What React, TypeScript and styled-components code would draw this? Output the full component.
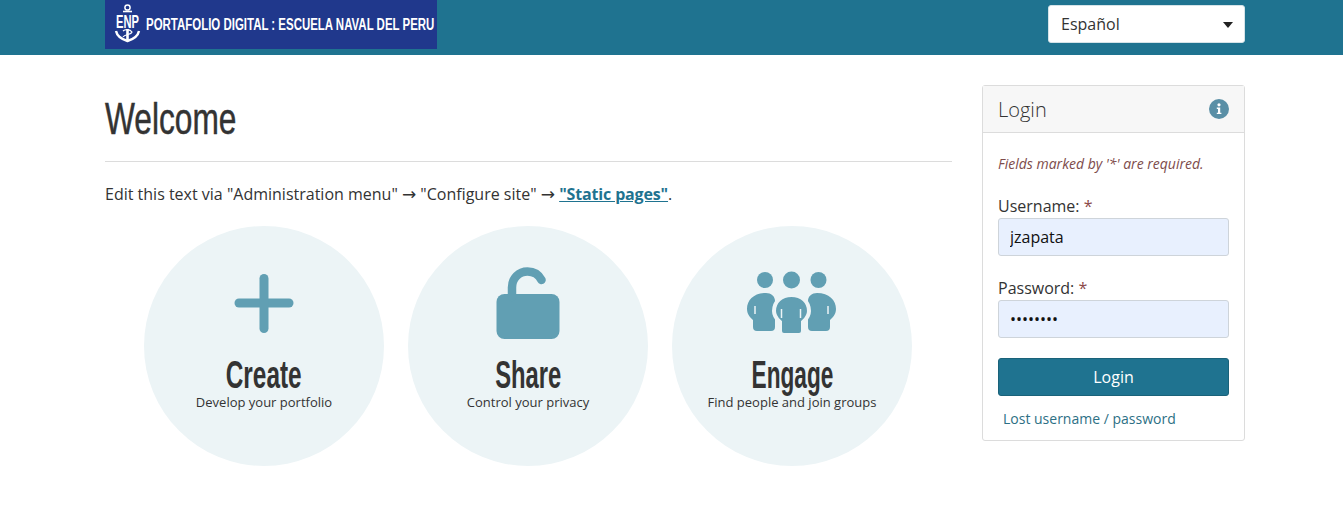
import type { ReactNode } from 'react';
import styled, { createGlobalStyle } from 'styled-components';

const GlobalStyle = createGlobalStyle`
  html, body {
    margin: 0;
    padding: 0;
    background: #fff;
    color: #333;
    font-family: "Open Sans", "Liberation Sans", sans-serif;
    font-size: 16px;
  }
  * { box-sizing: border-box; }
`;

const HEADING_FONT = `"Liberation Sans", Arial, sans-serif`;

const Header = styled.header`
  height: 55px;
  background: #1f7390;
  display: flex;
  justify-content: space-between;
  align-items: flex-start;
  padding: 0 98px 0 105px;
`;

const Logo = styled.div`
  width: 332px;
  height: 49px;
  background: #20388c;
  display: flex;
  align-items: center;
  padding-left: 9px;
  gap: 5px;
  color: #fff;
  svg { flex: none; }
`;

const LogoText = styled.span`
  flex: none;
  width: max-content;
  font-family: ${HEADING_FONT};
  font-weight: 700;
  font-size: 16px;
  white-space: nowrap;
  transform: scaleX(0.716);
  transform-origin: left center;
`;

const LangPicker = styled.div`
  position: relative;
  margin-top: 5px;
  width: 197px;
  height: 38px;
`;

const LangSelect = styled.select`
  width: 100%;
  height: 100%;
  appearance: none;
  border: 1px solid #d5e3e8;
  border-radius: 3px;
  background: #fff;
  color: #333;
  padding: 0 12px;
  font: 400 16px "Open Sans", sans-serif;
`;

const Caret = styled.span`
  position: absolute;
  right: 12px;
  top: 17px;
  border-left: 5.5px solid transparent;
  border-right: 5.5px solid transparent;
  border-top: 6px solid #222;
`;

const Page = styled.div`
  display: flex;
  gap: 30px;
  padding: 30px 98px 0 105px;
  align-items: flex-start;
`;

const Main = styled.main`
  width: 847px;
`;

const Title = styled.h1`
  margin: 0;
  padding-bottom: 13px;
  border-bottom: 1px solid #dcdcdc;
  font-family: ${HEADING_FONT};
  font-weight: 400;
  font-size: 44px;
  line-height: 63px;
  color: #333;
`;

const TitleText = styled.span`
  display: inline-block;
  transform: translateY(2px) scaleX(0.72);
  transform-origin: left center;
  -webkit-text-stroke: 0.5px #333;
`;

const Intro = styled.p`
  margin: 20px 0 0;
  line-height: 24px;
  color: #333;
`;

const Arrow = styled.span`
  font-family: "DejaVu Sans", sans-serif;
  font-size: 17px;
  line-height: 1;
`;

const IntroLink = styled.a`
  color: #1f7390;
  font-weight: 700;
  letter-spacing: -0.15px;
  text-decoration: underline;
`;

const Circles = styled.div`
  display: flex;
  justify-content: center;
  gap: 24px;
  margin-top: 20px;
  padding-right: 1px;
`;

const Circle = styled.div`
  width: 240px;
  height: 240px;
  border-radius: 50%;
  background: #ecf4f6;
  display: flex;
  flex-direction: column;
  align-items: center;
`;

const IconSlot = styled.div<{ $top: number }>`
  height: 130px;
  display: flex;
  justify-content: center;
  align-items: flex-start;
  padding-top: ${({ $top }) => $top}px;
  flex: none;
`;

const CircleTitle = styled.div<{ $stretch: number }>`
  font-family: ${HEADING_FONT};
  font-weight: 700;
  font-size: 39px;
  line-height: 37px;
  color: #333;
  transform: scaleX(${({ $stretch }) => $stretch});
`;

const CircleText = styled.div`
  font-size: 13px;
  line-height: 18px;
  color: #333;
`;

const Card = styled.aside`
  width: 263px;
  height: 356px;
  border: 1px solid #dcdcdc;
  border-radius: 3px;
`;

const CardHead = styled.div`
  height: 47px;
  background: #f7f7f7;
  border-bottom: 1px solid #dcdcdc;
  display: flex;
  align-items: center;
  justify-content: space-between;
  padding: 0 15px;
`;

const CardTitle = styled.h2`
  margin: 0;
  font-size: 20px;
  font-weight: 300;
  color: #333;
`;

const CardBody = styled.form`
  padding: 21px 15px 0;
`;

const Required = styled.p`
  margin: 0 0 21px;
  font-size: 14px;
  line-height: 19px;
  font-style: italic;
  color: #7d4b4b;
`;

const Field = styled.div`
  margin-bottom: 20px;
`;

const Label = styled.label`
  display: block;
  line-height: 24px;
  color: #333;
`;

const Star = styled.span`
  color: #8c4a4a;
`;

const Input = styled.input`
  display: block;
  width: 100%;
  height: 38px;
  border: 1px solid #ced4da;
  border-radius: 3px;
  background: #e8f0fe;
  color: #111;
  padding: 0 11px;
  font: 400 16px "Open Sans", sans-serif;
  outline: none;
`;

const Submit = styled.button`
  display: block;
  width: 100%;
  height: 38px;
  border: 1px solid #1a6279;
  border-radius: 3px;
  background: #1f7390;
  color: #fff;
  font: 400 16px "Open Sans", sans-serif;
`;

const Lost = styled.a`
  display: block;
  margin: 13px 0 0 5px;
  font-size: 14px;
  line-height: 20px;
  color: #2d7085;
  text-decoration: none;
`;

const AnchorLogo = () => (
  <svg width="27" height="42" viewBox="0 0 27 42" fill="none" stroke="#fff">
    <circle cx="13.500" cy="3.500" r="2.600" strokeWidth="1.500" />
    <path d="M9 7.500h9" strokeWidth="1.600" />
    <path d="M13.500 25v12" strokeWidth="2.600" />
    <path d="M2 27c1 5 5 8 11.500 10 6.500-2 10.500-5 11.500-10" strokeWidth="2.400" />
    <path d="M9 27c2-2 7-2 9 1-1 3-7 2-9 5" strokeWidth="1.200" />
    <text transform="translate(13.500 24) scale(0.62 1)" textAnchor="middle" fill="#fff" stroke="none" fontFamily="'Liberation Sans', sans-serif" fontWeight="700" fontSize="18">ENP</text>
  </svg>
);

const PlusIcon = () => (
  <svg width="60" height="60" viewBox="0 0 60 60" fill="#619fb3">
    <rect x="0.500" y="24.500" width="59" height="9" rx="4.500" />
    <rect x="25.500" y="0" width="9" height="59" rx="4.500" />
  </svg>
);

const LockIcon = () => (
  <svg width="64" height="72" viewBox="0 0 64 72">
    <rect x="0.500" y="27" width="63" height="45" rx="8" fill="#619fb3" />
    <path d="M16 30V20.500C16 11 23 4.500 31.500 4.500 38 4.500 43 8 45.500 13" fill="none" stroke="#619fb3" strokeWidth="8.500" strokeLinecap="round" />
  </svg>
);

const sideBody = 'M20 22C8 22 1 29 1 38c0 6 4 9 6 11v7a4 4 0 0 0 4 4h14a4 4 0 0 0 4-4V30c0-5-4-8-9-8Z';

const PeopleIcon = () => (
  <svg width="92" height="66" viewBox="0 0 92 66" fill="#619fb3">
    <circle cx="19" cy="9" r="8" />
    <circle cx="45.500" cy="9" r="8.500" />
    <circle cx="72.500" cy="9" r="8" />
    <path d={sideBody} />
    <path d={sideBody} transform="matrix(-1 0 0 1 91 0)" />
    <path
      d="M45.500 24C56 24 63 31 63 40c0 6-4 9-6 11v9a4 4 0 0 1-4 4H38a4 4 0 0 1-4-4v-9c-2-2-6-5-6-11 0-9 7-16 17.500-16Z"
      stroke="#ecf4f6"
      strokeWidth="4"
    />
    <path d="M9 35v8M82 35v8M35.500 38v9M54.500 38v9" stroke="#ecf4f6" strokeWidth="1.500" />
  </svg>
);

const InfoIcon = () => (
  <svg width="20" height="20" viewBox="0 0 20 20">
    <circle cx="10" cy="10" r="10" fill="#5a8fa6" />
    <circle cx="10" cy="5.800" r="1.600" fill="#fff" />
    <path d="M7.800 8.500h3.400v5.200h1.200v1.400H7.800v-1.400H9V9.900H7.800Z" fill="#fff" />
  </svg>
);

const features: { title: string; text: string; top: number; stretch: number; icon: ReactNode }[] = [
  { title: 'Create', text: 'Develop your portfolio', top: 48, stretch: 0.625, icon: <PlusIcon /> },
  { title: 'Share', text: 'Control your privacy', top: 41, stretch: 0.61, icon: <LockIcon /> },
  { title: 'Engage', text: 'Find people and join groups', top: 45, stretch: 0.58, icon: <PeopleIcon /> },
];

export default function App() {
  return (
    <>
      <GlobalStyle />
      <Header>
        <Logo>
          <AnchorLogo />
          <LogoText>PORTAFOLIO DIGITAL : ESCUELA NAVAL DEL PERU</LogoText>
        </Logo>
        <LangPicker>
          <LangSelect defaultValue="es">
            <option value="es">Español</option>
          </LangSelect>
          <Caret />
        </LangPicker>
      </Header>
      <Page>
        <Main>
          <Title><TitleText>Welcome</TitleText></Title>
          <Intro>
            Edit this text via "Administration menu" <Arrow>→</Arrow> "Configure site" <Arrow>→</Arrow> <IntroLink href="#">"Static pages"</IntroLink>.
          </Intro>
          <Circles>
            {features.map((f) => (
              <Circle key={f.title}>
                <IconSlot $top={f.top}>{f.icon}</IconSlot>
                <CircleTitle $stretch={f.stretch}>{f.title}</CircleTitle>
                <CircleText>{f.text}</CircleText>
              </Circle>
            ))}
          </Circles>
        </Main>
        <Card>
          <CardHead>
            <CardTitle>Login</CardTitle>
            <InfoIcon />
          </CardHead>
          <CardBody>
            <Required>Fields marked by '*' are required.</Required>
            <Field>
              <Label>Username: <Star>*</Star></Label>
              <Input type="text" defaultValue="jzapata" />
            </Field>
            <Field>
              <Label>Password: <Star>*</Star></Label>
              <Input type="password" defaultValue="password" />
            </Field>
            <Submit type="button">Login</Submit>
            <Lost href="#">Lost username / password</Lost>
          </CardBody>
        </Card>
      </Page>
    </>
  );
}
